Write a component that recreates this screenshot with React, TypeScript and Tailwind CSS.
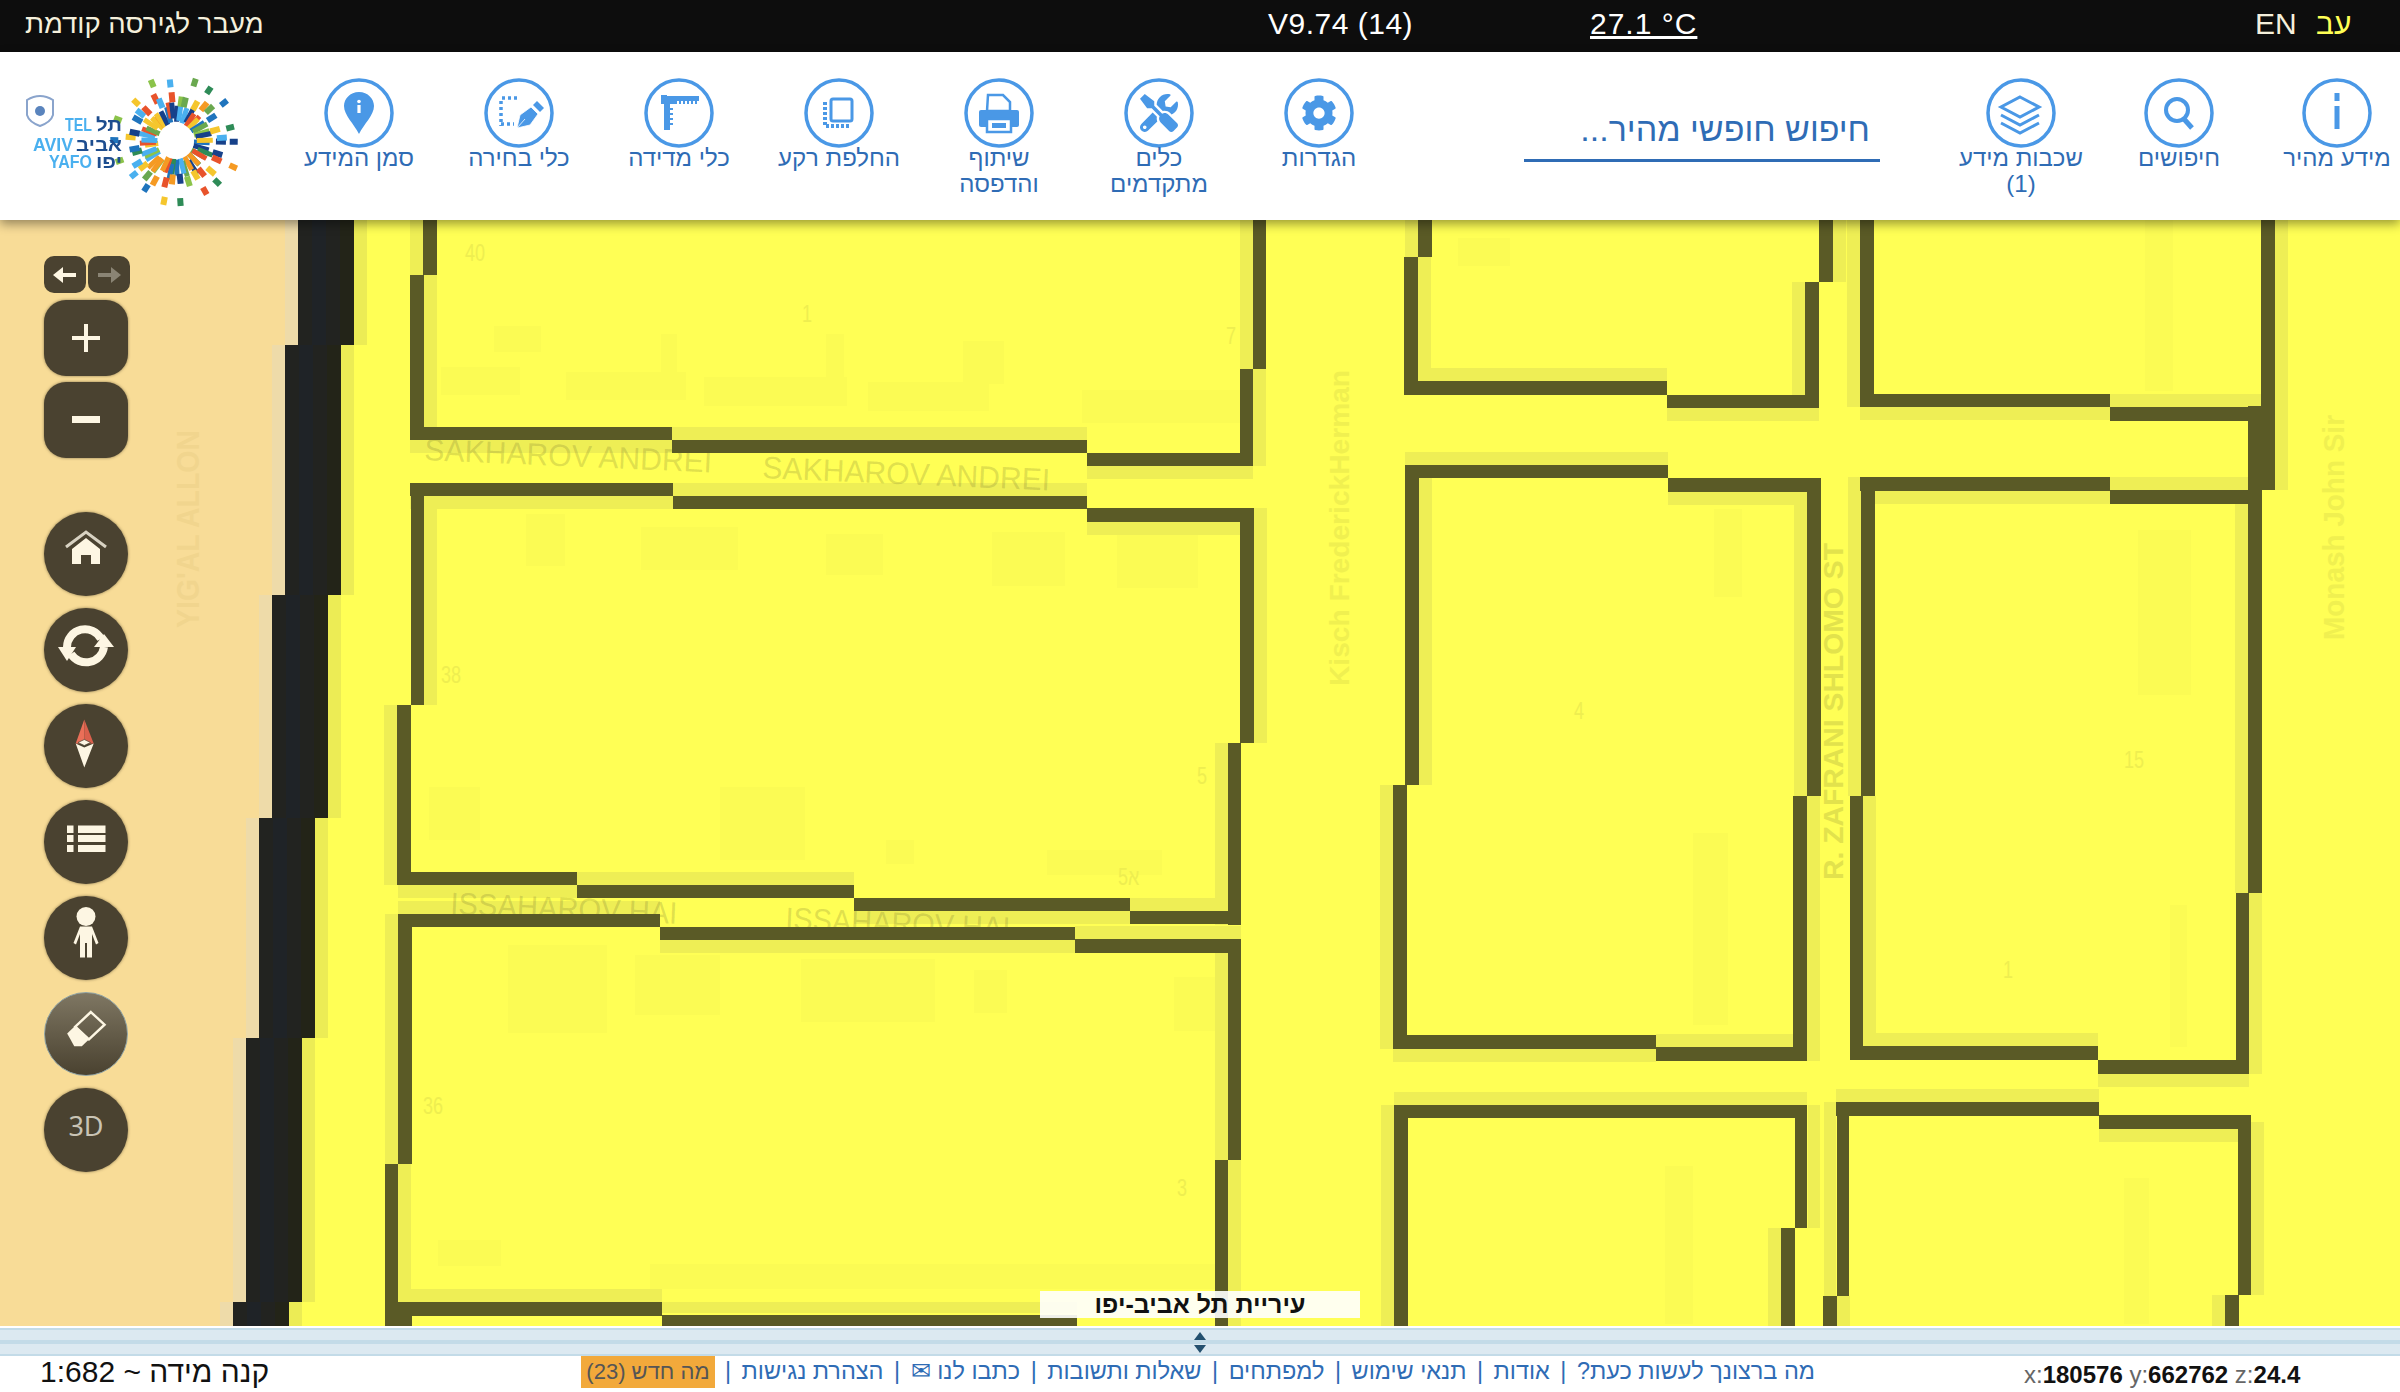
import React from "react";
import { FaCog, FaTools } from "react-icons/fa";

// x0, y0, x1, y1, side of the light ghost line next to the wall
type Wall = [number, number, number, number, "l" | "r" | "t" | "b" | "n"];

const walls: Wall[] = [
  // block top left
  [423, 220, 437, 275, "l"], [410, 275, 424, 440, "r"], [410, 427, 672, 440, "b"], [672, 440, 1087, 453, "t"],
  [1087, 453, 1253, 466, "b"], [1240, 369, 1253, 466, "r"], [1253, 220, 1266, 369, "l"],
  // second block
  [410, 483, 673, 496, "b"], [673, 496, 1087, 509, "t"], [1087, 508, 1253, 522, "b"], [411, 483, 424, 705, "r"],
  [397, 705, 411, 885, "l"], [1240, 508, 1254, 743, "r"], [1228, 743, 1241, 925, "l"], [398, 872, 577, 885, "b"],
  [577, 885, 854, 898, "t"], [854, 898, 1130, 911, "b"], [1130, 911, 1241, 924, "t"],
  // third block
  [398, 914, 660, 927, "t"], [660, 927, 1075, 940, "b"], [1075, 939, 1241, 953, "t"], [398, 914, 412, 1164, "l"],
  [385, 1164, 398, 1326, "r"], [385, 1302, 662, 1316, "t"], [398, 1303, 412, 1326, "n"], [662, 1315, 1077, 1326, "t"],
  [1228, 945, 1241, 1160, "l"], [1215, 1160, 1228, 1326, "r"],
  // middle top
  [1418, 220, 1432, 257, "l"], [1404, 257, 1418, 395, "r"], [1404, 381, 1667, 395, "t"], [1667, 395, 1819, 408, "b"],
  [1819, 220, 1833, 282, "r"], [1805, 282, 1819, 408, "l"],
  // right top
  [1860, 220, 1874, 407, "l"], [1860, 394, 2110, 407, "b"], [2110, 407, 2262, 421, "t"], [2261, 220, 2275, 490, "r"],
  [2248, 406, 2262, 490, "n"],
  // middle
  [1405, 465, 1668, 478, "t"], [1668, 478, 1819, 492, "b"], [1405, 465, 1419, 785, "r"], [1393, 785, 1407, 1049, "l"],
  [1393, 1035, 1656, 1049, "b"], [1656, 1047, 1807, 1061, "t"], [1793, 796, 1807, 1061, "r"], [1807, 478, 1821, 796, "l"],
  // right middle
  [1860, 477, 2110, 491, "b"], [2110, 490, 2262, 504, "t"], [1861, 477, 1875, 796, "l"], [1850, 796, 1863, 1060, "r"],
  [1850, 1046, 2098, 1060, "t"], [2098, 1060, 2249, 1074, "b"], [2248, 490, 2262, 893, "l"], [2236, 893, 2249, 1074, "r"],
  // bottom
  [1394, 1105, 1807, 1118, "t"], [1394, 1105, 1408, 1326, "l"], [1795, 1105, 1807, 1228, "r"], [1781, 1228, 1795, 1326, "l"],
  [1836, 1102, 2099, 1116, "t"], [2099, 1115, 2251, 1129, "b"], [1837, 1102, 1849, 1296, "l"], [1823, 1296, 1837, 1326, "r"],
  [2238, 1122, 2251, 1295, "r"], [2225, 1295, 2239, 1326, "l"],
];

// faint patches of the base map that show through the yellow
const patches = [
  [494, 326, 541, 352], [441, 367, 520, 395], [566, 372, 686, 400], [661, 334, 677, 373], [704, 377, 847, 406],
  [826, 334, 844, 380], [868, 382, 989, 411], [963, 341, 1004, 384], [1082, 390, 1247, 423], [526, 514, 565, 566],
  [641, 527, 738, 570], [826, 534, 883, 575], [992, 532, 1065, 586], [1117, 534, 1198, 588], [429, 787, 480, 840],
  [720, 787, 805, 860], [886, 840, 914, 864], [1047, 850, 1162, 875], [508, 945, 607, 1033], [635, 955, 720, 1015],
  [801, 959, 935, 1022], [974, 970, 1007, 1013], [1174, 977, 1223, 1031], [438, 1240, 501, 1266], [650, 1264, 1216, 1289],
  [1714, 509, 1742, 597], [2138, 530, 2191, 695], [2170, 905, 2187, 1047], [1693, 833, 1728, 1025], [1665, 1166, 1693, 1324],
  [2124, 1178, 2149, 1324], [1458, 238, 1510, 266], [2145, 220, 2173, 391],
];

const coast = [
  [220, 345, 298], [345, 595, 285], [595, 818, 272], [818, 1038, 259], [1038, 1302, 246], [1302, 1326, 233],
];

const numbers: [string, number, number][] = [
  ["40", 465, 261], ["1", 802, 322], ["7", 1226, 344], ["38", 441, 683], ["5", 1197, 784], ["א5", 1118, 885],
  ["36", 423, 1114], ["3", 1177, 1196], ["4", 1574, 719], ["15", 2124, 768], ["1", 2003, 978],
];

const MapCanvas = () => (
  <svg viewBox="0 220 2400 1106" className="block w-full h-full">
    <rect x="0" y="220" width="2400" height="1106" fill="#ffff55" />
    {coast.map(([y0, y1, x]) => (
      <g key={y0}>
        <rect x="0" y={y0} width={x} height={y1 - y0} fill="#f8dc97" />
        <rect x={x - 13} y={y0} width="13" height={y1 - y0} fill="#eedba9" />
        <rect x={x} y={y0} width="56" height={y1 - y0} fill="#222320" />
        <rect x={x + 14} y={y0} width="14" height={y1 - y0} fill="#1f2327" />
        <rect x={x + 42} y={y0} width="14" height={y1 - y0} fill="#232418" />
        <rect x={x + 56} y={y0} width="13" height={y1 - y0} fill="#ecec55" />
      </g>
    ))}
    {patches.map(([x0, y0, x1, y1]) => (
      <rect key={`${x0}-${y0}`} x={x0} y={y0} width={x1 - x0} height={y1 - y0} fill="#fbfb54" />
    ))}
    {walls.map(([x0, y0, x1, y1, side]) =>
      side === "n" ? null : (
        <rect
          key={`h${x0}-${y0}-${x1}`}
          x={x0 + (side === "l" ? -13 : side === "r" ? 13 : 0)}
          y={y0 + (side === "t" ? -13 : side === "b" ? 13 : 0)}
          width={x1 - x0}
          height={y1 - y0}
          fill="#eeee55"
        />
      )
    )}
    {walls.map(([x0, y0, x1, y1]) => (
      <rect key={`w${x0}-${y0}-${x1}`} x={x0} y={y0} width={x1 - x0} height={y1 - y0} fill="#5a5a26" />
    ))}
    <g fontFamily="Liberation Sans, sans-serif" fontWeight="700">
      <text transform="translate(199 628) rotate(-90)" fontSize="32" textLength="198" lengthAdjust="spacingAndGlyphs" fill="#f1d58e">YIG'AL ALLON</text>
      <text transform="translate(1349 686) rotate(-90)" fontSize="28" textLength="316" lengthAdjust="spacingAndGlyphs" fill="#f0f050">Kisch FrederickHerman</text>
      <text transform="translate(1843 880) rotate(-90)" fontSize="27" textLength="337" lengthAdjust="spacingAndGlyphs" fill="#e2e24c">R. ZAFRANI SHLOMO ST</text>
      <text transform="translate(2344 640) rotate(-90)" fontSize="30" textLength="225" lengthAdjust="spacingAndGlyphs" fill="#f0f050">Monash John Sir</text>
    </g>
    <g fontFamily="Liberation Sans, sans-serif" fontSize="31" fill="#5a5a26" fillOpacity="0.2">
      <text transform="translate(424 460) rotate(2.5)" textLength="288" lengthAdjust="spacingAndGlyphs">SAKHAROV ANDREI</text>
      <text transform="translate(762 478) rotate(2.5)" textLength="288" lengthAdjust="spacingAndGlyphs">SAKHAROV ANDREI</text>
      <text transform="translate(450 914) rotate(2.5)" textLength="227" lengthAdjust="spacingAndGlyphs">ISSAHAROV HAI</text>
      <text transform="translate(785 929) rotate(2.5)" textLength="225" lengthAdjust="spacingAndGlyphs">ISSAHAROV HAI</text>
    </g>
    <g fontFamily="Liberation Sans, sans-serif" fontSize="24" fill="#eeee50">
      {numbers.map(([t, x, y]) => (
        <text key={`${t}${x}`} x={x} y={y} transform={`translate(${x} 0) scale(0.75 1) translate(${-x} 0)`}>{t}</text>
      ))}
    </g>
  </svg>
);

const logoColors = ["#e8532b", "#f59a23", "#f5c62d", "#6aa84f", "#2e8b57", "#1f74bd", "#4ab0ef", "#17418a", "#8bc34a"];

// ring of small coloured tiles round the white hole, seeded so it is always the same
const logoTiles = () => {
  const tiles = [];
  let seed = 17;
  const next = () => {
    seed = (seed * 137 + 59) % 1009;
    return seed / 1009;
  };
  const bands = [
    [48, 27, 16, 5],
    [32, 42, 10, 6],
    [18, 58, 8, 6],
  ];
  for (const [count, radius, len, wide] of bands) {
    for (let i = 0; i < count; i++) {
      const angle = (i / count) * 360 + next() * 8;
      const r = radius + next() * 9 - 4;
      tiles.push(
        <rect
          key={`${radius}-${i}`}
          x={r - len / 2}
          y={-wide / 2}
          width={len}
          height={wide}
          fill={logoColors[Math.floor(next() * logoColors.length)]}
          transform={`rotate(${angle})`}
        />
      );
    }
  }
  return tiles;
};

const Logo = () => (
  <svg viewBox="10 70 250 140" className="w-[250px] h-[140px] blur-[0.6px] [direction:ltr]">
    <g transform="translate(176 141)">
      {logoTiles()}
      <circle r="18" fill="#fff" />
    </g>
    <path d="M27 100 q13 -8 26 0 v15 q-2 7 -13 11 q-11 -4 -13 -11z" fill="none" stroke="#8aa4cc" strokeWidth="2" />
    <circle cx="40" cy="111" r="5" fill="#5a84bd" />
    <g fontFamily="Liberation Sans, sans-serif" fontWeight="700" fontSize="18">
      <text x="65" y="131" textLength="27" lengthAdjust="spacingAndGlyphs" fill="#4ab0ef">TEL</text>
      <text x="33" y="151" textLength="40" lengthAdjust="spacingAndGlyphs" fill="#4ab0ef">AVIV</text>
      <text x="49" y="168" textLength="43" lengthAdjust="spacingAndGlyphs" fill="#4ab0ef">YAFO</text>
      <text x="96" y="131" textLength="26" lengthAdjust="spacingAndGlyphs" fill="#1d4d8f">תל</text>
      <text x="76" y="151" textLength="46" lengthAdjust="spacingAndGlyphs" fill="#1d4d8f">אביב</text>
      <text x="96" y="168" textLength="26" lengthAdjust="spacingAndGlyphs" fill="#1d4d8f">יפו</text>
    </g>
  </svg>
);

const blue = "#4a98e6";

const headerIcons: Record<string, React.ReactNode> = {
  info: (
    <g fill={blue}>
      <rect x="32.5" y="15" width="5" height="8" />
      <rect x="32.5" y="28" width="5" height="23" />
    </g>
  ),
  search: (
    <g fill="none" stroke={blue} strokeWidth="4">
      <circle cx="33" cy="32" r="11" />
      <path d="M40 41 L48 50" strokeWidth="5" />
    </g>
  ),
  layers: (
    <g fill="none" stroke={blue} strokeWidth="3">
      <path d="M34 19 L53 29 L34 39 L15 29Z" />
      <path d="M15 37 L34 47 L53 37" />
      <path d="M15 45 L34 55 L53 45" />
    </g>
  ),
  cog: <FaCog x="17" y="17" size={36} color={blue} />,
  tools: <FaTools x="16" y="16" size={38} color={blue} />,
  print: (
    <g>
      <path d="M24 17 h15 l7 7 v9 h-23z" fill="none" stroke={blue} strokeWidth="2.5" />
      <rect x="15" y="32" width="40" height="17" rx="2" fill={blue} />
      <rect x="23" y="41" width="24" height="13" fill="#fff" stroke={blue} strokeWidth="2.5" />
      <rect x="28" y="45" width="14" height="5" fill={blue} />
    </g>
  ),
  background: (
    <g>
      <rect x="27" y="21" width="21" height="22" rx="2" fill="none" stroke={blue} strokeWidth="3" />
      <path d="M21 24 V48 H46" fill="none" stroke={blue} strokeWidth="4" strokeDasharray="3 2" />
    </g>
  ),
  ruler: (
    <g fill={blue}>
      <rect x="17" y="17" width="6" height="9" />
      <path d="M21 18 H55 V23 H53 V26 H51 V23 H49 V26 H47 V23 H45 V26 H43 V23 H41 V26 H39 V23 H37 V26 H35 V23 H33 V26 H26 V30 H29 V32 H26 V35 H29 V37 H26 V40 H29 V42 H26 V45 H29 V47 H26 V52 H20 V26 H21Z" />
    </g>
  ),
  select: (
    <g>
      <path d="M18 20 H33 M17 23 V48 M17 46 H30" fill="none" stroke={blue} strokeWidth="3.5" strokeDasharray="3 3" />
      <path d="M33 50 L36 37 L47 29 L54 36 L46 47Z M33 50 L41 41" fill={blue} stroke="#fff" strokeWidth="0.8" />
      <path d="M49 27 L53 23 L60 30 L56 34Z" fill={blue} />
    </g>
  ),
  pin: (
    <g>
      <path d="M35 14 C26 14 20 21 20 28 C20 37 30 46 35 56 C40 46 50 37 50 28 C50 21 44 14 35 14Z" fill={blue} />
      <circle cx="35" cy="23.5" r="1.8" fill="#fff" />
      <rect x="33.4" y="27" width="3.2" height="8" fill="#fff" />
    </g>
  ),
};

const CircleIcon = ({ name }: { name: string }) => (
  <svg viewBox="0 0 70 70" className="w-[70px] h-[70px]">
    <circle cx="35" cy="35" r="33" fill="none" stroke={blue} strokeWidth="3.5" />
    {headerIcons[name]}
  </svg>
);

const HeaderItem = ({ icon, label }: { icon: string; label: string[] }) => (
  <div className="w-[126px] flex flex-col items-center">
    <CircleIcon name={icon} />
    {label.map((line) => (
      <div key={line} className="whitespace-nowrap text-[24px] leading-[26px] text-[#2f6cb5] -translate-y-[3px]">
        {line}
      </div>
    ))}
  </div>
);

const Header = () => (
  <header dir="rtl" className="relative z-10 h-[168px] shrink-0 bg-white flex items-start shadow-[0_4px_10px_rgba(0,0,0,0.4)]">
    <div className="mt-[26px] flex gap-[32px]">
      <HeaderItem icon="info" label={["מידע מהיר"]} />
      <HeaderItem icon="search" label={["חיפושים"]} />
      <HeaderItem icon="layers" label={["שכבות מידע", "(1)"]} />
    </div>
    <div className="mr-[78px] mt-[56px] w-[356px] h-[54px] border-b-[3px] border-[#2f6cb5] pr-[10px] text-[34px] leading-[42px] text-[#2f6cb5]">
      חיפוש חופשי מהיר...
    </div>
    <div className="mr-[142px] mt-[26px] flex gap-[34px]">
      <HeaderItem icon="cog" label={["הגדרות"]} />
      <HeaderItem icon="tools" label={["כלים", "מתקדמים"]} />
      <HeaderItem icon="print" label={["שיתוף", "והדפסה"]} />
      <HeaderItem icon="background" label={["החלפת רקע"]} />
      <HeaderItem icon="ruler" label={["כלי מדידה"]} />
      <HeaderItem icon="select" label={["כלי בחירה"]} />
      <HeaderItem icon="pin" label={["סמן המידע"]} />
    </div>
    <div className="mr-[36px] mt-[18px]">
      <Logo />
    </div>
  </header>
);

const roundBtn = "w-[84px] h-[84px] rounded-full bg-[#4a4230] flex items-center justify-center shadow-[0_0_3px_rgba(60,50,30,0.6)]";
const cream = "#fdf6e3";

const Toolbar = () => (
  <div className="absolute left-[44px] top-[36px] flex flex-col items-start">
    <div className="flex gap-[2px]">
      <button className="w-[42px] h-[37px] rounded-[10px] bg-[#4a4230] flex items-center justify-center">
        <svg width="26" height="18" viewBox="0 0 26 18"><path d="M1 9 L11 1 V7 H24 V11 H11 V17Z" fill={cream} /></svg>
      </button>
      <button className="w-[42px] h-[37px] rounded-[10px] bg-[#4a4230] flex items-center justify-center">
        <svg width="26" height="18" viewBox="0 0 26 18"><path d="M25 9 L15 1 V7 H2 V11 H15 V17Z" fill="#8a8474" /></svg>
      </button>
    </div>
    <button className="mt-[7px] w-[84px] h-[76px] rounded-[22px] bg-[#4a4230] flex items-center justify-center shadow-[0_0_3px_rgba(60,50,30,0.6)]">
      <svg width="28" height="28" viewBox="0 0 28 28"><path d="M12 0 H16 V12 H28 V16 H16 V28 H12 V16 H0 V12 H12Z" fill={cream} /></svg>
    </button>
    <button className="mt-[6px] w-[84px] h-[76px] rounded-[22px] bg-[#4a4230] flex items-center justify-center shadow-[0_0_3px_rgba(60,50,30,0.6)]">
      <svg width="28" height="8" viewBox="0 0 28 8"><rect y="0" width="28" height="7" fill={cream} /></svg>
    </button>
    <button className={`mt-[54px] ${roundBtn}`}>
      <svg width="84" height="84" viewBox="0 0 84 84">
        <path d="M22 35 L42 20 L62 35" fill="none" stroke="#d8d2c2" strokeWidth="3" />
        <path d="M42 26 L56 37 V52 H47 V43 H37 V52 H28 V37Z" fill={cream} />
      </svg>
    </button>
    <button className={`mt-[12px] ${roundBtn}`}>
      <svg width="84" height="84" viewBox="0 0 84 84">
        <path d="M57 31 A18 18 0 0 0 23 39" fill="none" stroke={cream} strokeWidth="8" />
        <path d="M27 46 A18 18 0 0 0 60 39" fill="none" stroke={cream} strokeWidth="8" />
        <path d="M60 26 L70 39 H50Z" fill={cream} />
        <path d="M23 53 L14 39 H32Z" fill={cream} />
      </svg>
    </button>
    <button className={`mt-[12px] ${roundBtn}`}>
      <svg width="84" height="84" viewBox="0 0 84 84">
        <path d="M40.3 15.5 L31.7 39.5 H40.3Z" fill="#ea6f58" />
        <path d="M40.3 15.5 L49.7 39.5 H40.3Z" fill="#d9604c" />
        <path d="M31.7 39.5 L40.3 63.5 L49.7 39.5 L40.3 43.5Z" fill={cream} />
        <path d="M34 38.5 L40.3 35.5 L46.5 38.5 L40.3 41.5Z" fill={cream} stroke="#4a4230" strokeWidth="0.7" />
      </svg>
    </button>
    <button className={`mt-[12px] ${roundBtn}`}>
      <svg width="84" height="84" viewBox="0 0 84 84" fill={cream}>
        <rect x="23" y="25.5" width="6.5" height="7.5" /><rect x="34" y="25.5" width="27.5" height="7.5" />
        <rect x="23" y="35" width="6.5" height="7" /><rect x="34" y="35" width="27.5" height="7" />
        <rect x="23" y="45" width="6.5" height="7" /><rect x="34" y="45" width="27.5" height="7" />
      </svg>
    </button>
    <button className={`mt-[12px] ${roundBtn}`}>
      <svg width="84" height="84" viewBox="0 0 84 84" fill={cream}>
        <circle cx="42" cy="20.5" r="9.5" />
        <path d="M36 30.5 H48 L54.5 47 L52 48.5 L48 38 V61.5 H43 V47 H41 V61.5 H36 V38 L32 48.5 L29.5 47Z" />
      </svg>
    </button>
    <button className="mt-[12px] w-[84px] h-[84px] rounded-full bg-gradient-to-b from-[#7f7763] to-[#4a4230] border border-[#8fa3a6] flex items-center justify-center">
      <svg width="84" height="84" viewBox="0 0 84 84">
        <path d="M47 19.5 L61 32.5 L45 47.5 L31 34.5Z" fill="none" stroke={cream} strokeWidth="2.5" />
        <path d="M31 33.5 L45.5 47 L37.7 54.5 H30 L22.7 41.4Z" fill={cream} />
      </svg>
    </button>
    <button className={`mt-[12px] ${roundBtn} pb-[8px] text-[27px] text-[#c9c4b5] font-['Noto_Sans',sans-serif]`}>3D</button>
  </div>
);

const Splitter = () => (
  <div className="h-[30px] shrink-0 bg-white pt-[2px]">
    <div className="h-[28px] bg-[#dce9f1] border-y-2 border-[#c3dbe8] relative flex flex-col justify-center">
      <div className="h-[4px] bg-[#c3dbe8]" />
      <span className="absolute left-[1194px] top-[2px] w-0 h-0 border-x-[6px] border-x-transparent border-b-[8px] border-b-[#24506f]" />
      <span className="absolute left-[1194px] bottom-[1px] w-0 h-0 border-x-[6px] border-x-transparent border-t-[8px] border-t-[#24506f]" />
    </div>
  </div>
);

const footerLinks = ["מה ברצונך לעשות כעת?", "אודות", "תנאי שימוש", "למפתחים", "שאלות ותשובות", "כתבו לנו ✉", "הצהרת נגישות"];

const Footer = () => (
  <footer className="h-[36px] shrink-0 bg-white flex items-start">
    <div className="w-[580px] pl-[40px] text-[30px] leading-[32px] text-[#111]">
      <span dir="rtl">קנה מידה ~ 1:682</span>
    </div>
    <div dir="rtl" className="w-[1235px] flex items-center h-[32px] text-[23.5px] text-[#2f6cb5] whitespace-nowrap">
      {footerLinks.map((link, i) => (
        <React.Fragment key={link}>
          {i > 0 && <span className="mx-[10.5px]">|</span>}
          <span>{link}</span>
        </React.Fragment>
      ))}
      <span className="mx-[10.5px]">|</span>
      <span className="bg-[#f2a93b] text-[22px] text-[#555] h-[32px] leading-[32px] px-[5px]">מה חדש (23)</span>
    </div>
    <div className="ml-[209px] mt-[5px] text-[24px] leading-[28px] text-[#666] whitespace-nowrap">
      x:<b className="text-[#111]">180576</b> y:<b className="text-[#111]">662762</b> z:<b className="text-[#111]">24.4</b>
    </div>
  </footer>
);

const App = () => (
  <div className="h-screen w-full flex flex-col overflow-hidden font-['Liberation_Sans',sans-serif]">
    <div className="h-[52px] shrink-0 bg-[#0d0d0d] flex items-center pb-[5px] text-[27.5px] text-[#f5f0dc]">
      <div dir="rtl" className="w-[1268px] pl-[25px] text-left">מעבר לגירסה קודמת</div>
      <div className="w-[322px] text-[30px] tracking-[0.5px] text-white">V9.74 (14)</div>
      <div className="w-[665px] text-[30px] tracking-[1px] text-white underline">27.1 °C</div>
      <div className="w-[61px] text-[30px]">EN</div>
      <div className="text-[30px] text-[#ffff55]">עב</div>
    </div>
    <Header />
    <main className="relative flex-1 min-h-0 overflow-hidden">
      <MapCanvas />
      <Toolbar />
      <div dir="rtl" className="absolute left-[1040px] bottom-[8px] w-[320px] h-[27px] bg-white/90 text-center text-[25px] leading-[27px] font-bold text-[#111]">
        עיריית תל אביב-יפו
      </div>
    </main>
    <Splitter />
    <Footer />
  </div>
);

export default App;
